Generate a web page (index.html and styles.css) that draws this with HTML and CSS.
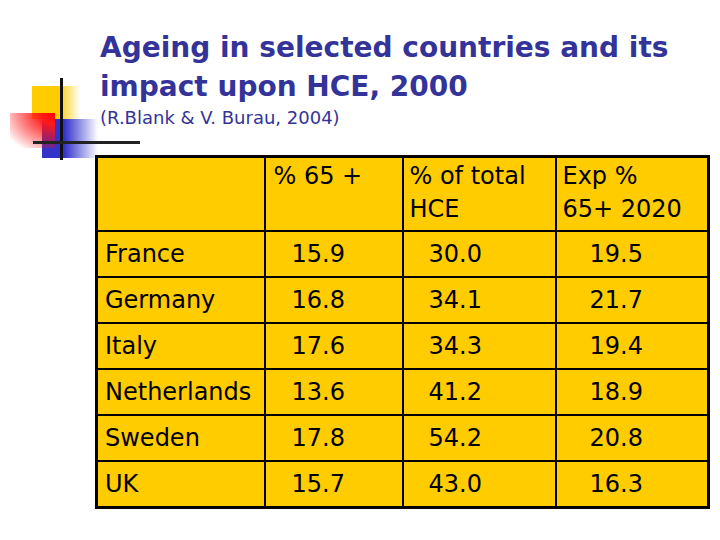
FILE: index.html
```html
<!DOCTYPE html>
<html>
<head>
<meta charset="utf-8">
<link rel="stylesheet" href="styles.css">
</head>
<body>
<div class="slide">
  <svg class="logo" width="140" height="170" viewBox="0 0 140 170" aria-hidden="true">
    <defs>
      <linearGradient id="gy" x1="0" y1="0" x2="1" y2="0">
        <stop offset="0" stop-color="#FFCC00"/>
        <stop offset="0.55" stop-color="#FFCC00"/>
        <stop offset="1" stop-color="#FFCC00" stop-opacity="0"/>
      </linearGradient>
      <linearGradient id="gb" x1="0" y1="0" x2="1" y2="0">
        <stop offset="0" stop-color="#3333CC"/>
        <stop offset="0.4" stop-color="#3333CC"/>
        <stop offset="1" stop-color="#3333CC" stop-opacity="0"/>
      </linearGradient>
      <radialGradient id="gr" cx="1" cy="0" r="1.25" fx="1" fy="0">
        <stop offset="0" stop-color="#FF0000"/>
        <stop offset="0.25" stop-color="#FF1A1A"/>
        <stop offset="1" stop-color="#FF0000" stop-opacity="0"/>
      </radialGradient>
    </defs>
    <rect x="32" y="86" width="48" height="33" fill="url(#gy)"/>
    <rect x="42" y="119" width="56" height="39" fill="url(#gb)"/>
    <rect x="10" y="113" width="45" height="35" fill="url(#gr)"/>
    <rect x="60" y="78" width="3" height="82" fill="#111"/>
    <rect x="33" y="141" width="107" height="3" fill="#222"/>
  </svg>
  <header class="heading">
    <h1 class="title">Ageing in selected countries and its impact upon HCE, 2000</h1>
    <p class="source">(R.Blank &amp; V. Burau, 2004)</p>
  </header>
  <table class="data">
    <colgroup>
      <col class="c0"><col class="c1"><col class="c2"><col class="c3">
    </colgroup>
    <tr class="head">
      <th></th>
      <th class="h1">% 65 +</th>
      <th class="h2">% of total<br>HCE</th>
      <th class="h3">Exp %<br>65+ 2020</th>
    </tr>
    <tr><td class="name">France</td><td class="v1">15.9</td><td class="v2">30.0</td><td class="v3">19.5</td></tr>
    <tr><td class="name">Germany</td><td class="v1">16.8</td><td class="v2">34.1</td><td class="v3">21.7</td></tr>
    <tr><td class="name">Italy</td><td class="v1">17.6</td><td class="v2">34.3</td><td class="v3">19.4</td></tr>
    <tr><td class="name">Netherlands</td><td class="v1">13.6</td><td class="v2">41.2</td><td class="v3">18.9</td></tr>
    <tr><td class="name">Sweden</td><td class="v1">17.8</td><td class="v2">54.2</td><td class="v3">20.8</td></tr>
    <tr><td class="name">UK</td><td class="v1">15.7</td><td class="v2">43.0</td><td class="v3">16.3</td></tr>
  </table>
</div>
</body>
</html>
```
FILE: styles.css
```css
html, body {
  margin: 0;
  padding: 0;
  background: #ffffff;
}
.slide {
  position: relative;
  width: 720px;
  height: 540px;
  overflow: hidden;
  font-family: "DejaVu Sans", "Liberation Sans", sans-serif;
}
.logo {
  position: absolute;
  left: 0;
  top: 0;
}
.heading {
  position: relative;
  padding: 28px 0 0 100px;
  color: #333399;
}
.title {
  margin: 0;
  font-size: 28px;
  font-weight: bold;
  line-height: 39px;
  width: 610px;
}
.source {
  margin: 0;
  font-size: 18px;
  line-height: 24px;
}
.data {
  margin: 25px 0 0 95px;
  border-collapse: collapse;
  table-layout: fixed;
  width: 614px;
  background: #FFCC00;
  border: 3px solid #000;
  font-size: 24px;
  color: #000;
}
.c0 { width: 168px; }
.c1 { width: 138px; }
.c2 { width: 153px; }
.c3 { width: 153px; }
.data th, .data td {
  border: 2px solid #000;
  padding: 0;
  font-weight: normal;
  text-align: left;
  line-height: 33px;
}
.head th {
  height: 70px;
  vertical-align: top;
  padding-top: 2px;
}
.data td {
  height: 44px;
  vertical-align: middle;
}
.h1 { padding-left: 8px !important; }
.h2, .h3 { padding-left: 6px !important; }
.name { padding-left: 7px !important; }
.v1 { padding-left: 26px !important; }
.v2 { padding-left: 25px !important; }
.v3 { padding-left: 33px !important; }
```
